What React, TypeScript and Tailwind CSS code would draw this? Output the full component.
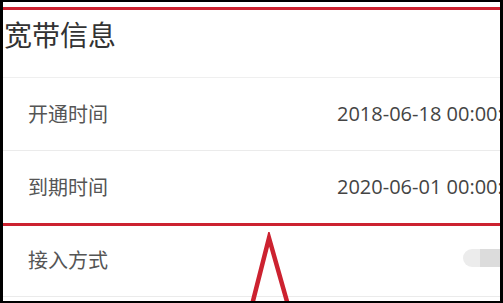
import React from 'react';

interface InfoRow {
  label: string;
  value?: string;
  masked?: boolean;
}

const rows: InfoRow[] = [
  { label: '开通时间', value: '2018-06-18 00:00:00' },
  { label: '到期时间', value: '2020-06-01 00:00:00' },
  { label: '接入方式', masked: true },
];

const font = { fontFamily: '"Noto Sans CJK SC", "Noto Sans", sans-serif' };
const numFont = { fontFamily: '"Open Sans", "Noto Sans CJK SC", sans-serif' };

export default function App() {
  return (
    <div
      className="relative w-[503px] h-[303px] overflow-hidden bg-white border-black border-l-[3px] border-r-[3px] border-t-[2px] border-b-[2px]"
      style={font}
    >
      <div className="h-[75px] pt-[12px] pl-[1px] text-[28px] leading-[40px] text-[#333]">
        宽带信息
      </div>
      <div className="border-t border-[#efefef]">
        {rows.map((row, i) => (
          <div
            key={i}
            className="flex items-center h-[73px] border-b border-[#ebebeb] whitespace-nowrap"
          >
            <div className="w-[334px] shrink-0 pl-[25px] text-[20px] text-[#555]">
              {row.label}
            </div>
            {row.masked ? (
              <div className="ml-auto flex h-[18px] w-[37px] -mt-[5px]">
                <div className="flex-1 rounded-l-full bg-[#ececec]" />
                <div className="w-[20px] bg-[#dcdcdc]" />
              </div>
            ) : (
              <div className="text-[20px] text-[#444]" style={numFont}>
                {row.value}
              </div>
            )}
          </div>
        ))}
      </div>

      {/* annotation box */}
      <div className="absolute left-[-6px] right-[-6px] top-[5px] h-[219px] border-[3px] border-[#cc2230] pointer-events-none" />

      {/* annotation arrow */}
      <svg
        className="absolute left-[242px] top-[230px] pointer-events-none"
        width="50"
        height="80"
        viewBox="0 0 50 80"
      >
        <polyline
          points="5.7,78 24,6 44.4,78"
          fill="none"
          stroke="#cc2230"
          strokeWidth="4.5"
          strokeLinejoin="miter"
        />
      </svg>
    </div>
  );
}
